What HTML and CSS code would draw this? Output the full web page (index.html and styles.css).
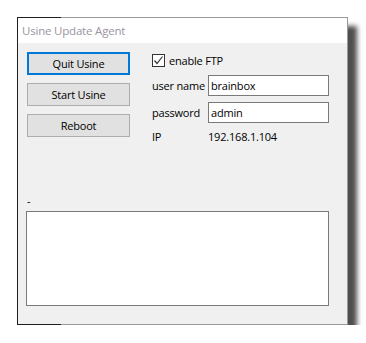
FILE: index.html
```html
<!DOCTYPE html>
<html lang="en">
<head>
    <meta charset="UTF-8">
    <title>Usine Update Agent</title>
    <link rel="stylesheet" href="styles.css">
</head>
<body>
    <div class="window">
        <div class="titlebar">Usine Update Agent</div>

        <div class="content">
            <div class="top">
                <div class="buttons">
                    <button class="btn btn-default">Quit Usine</button>
                    <button class="btn">Start Usine</button>
                    <button class="btn">Reboot</button>
                </div>

                <div class="ftp">
                    <label class="check-row">
                        <span class="checkbox">
                            <svg width="11" height="11" viewBox="0 0 11 11">
                                <path d="M1.5 5.5 L4 8.5 L9.5 1.5" fill="none" stroke="#333" stroke-width="1.2"/>
                            </svg>
                        </span>
                        enable FTP
                    </label>
                    <div class="field">
                        <span class="label">user name</span>
                        <input class="input" type="text" value="brainbox">
                    </div>
                    <div class="field">
                        <span class="label">password</span>
                        <input class="input" type="text" value="admin">
                    </div>
                    <div class="field ip">
                        <span class="label">IP</span>
                        <span>192.168.1.104</span>
                    </div>
                </div>
            </div>

            <div class="status">-</div>
            <div class="log"></div>
        </div>
    </div>
</body>
</html>
```

FILE: styles.css
```css
body {
    margin: 0;
    background: #fff;
    font-family: 'Open Sans', 'Noto Sans', sans-serif;
    font-size: 11px;
    letter-spacing: -0.2px;
    color: #000;
}
.window {
    position: relative;
    margin: 17px 0 0 17px;
    width: 329px;
    height: 306px;
    border: 1px solid #9a9a9a;
    border-left-color: #1e1e1e;
    background: #f0f0f0;
    box-shadow: 9px 9px 5px #4e4e4e;
    display: flex;
    flex-direction: column;
}
/* dark corner segments of the frame */
.window::before,
.window::after {
    content: "";
    position: absolute;
    left: -1px;
    width: 44px;
    height: 1px;
    background: #1e1e1e;
}
.window::before { top: -1px; }
.window::after { bottom: -1px; }
.titlebar {
    height: 25px;
    line-height: 25px;
    background: #fff;
    color: #9a959f;
    font-size: 11.5px;
    padding-left: 4px;
}
.content {
    flex: 1;
    padding: 9px 0 0 8px;
}
.top {
    display: flex;
    gap: 22px;
}
.buttons {
    display: flex;
    flex-direction: column;
    gap: 8px;
    padding-left: 1px;
}
.btn {
    width: 103px;
    height: 23px;
    border: 1px solid #adadad;
    background: #e1e1e1;
    font-family: inherit;
    font-size: 11px;
    letter-spacing: inherit;
    color: #000;
    padding: 0;
}
.btn-default {
    border: 2px solid #0078d7;
}
.ftp {
    display: flex;
    flex-direction: column;
    padding-top: 2px;
}
.check-row {
    display: flex;
    align-items: center;
    gap: 4px;
    height: 13px;
    margin-bottom: 8px;
}
.checkbox {
    width: 11px;
    height: 11px;
    border: 1px solid #333;
    background: #fff;
    display: flex;
}
.field {
    display: flex;
    align-items: center;
    height: 21px;
    margin-bottom: 6px;
}
.field .label {
    width: 56px;
}
.input {
    box-sizing: border-box;
    width: 121px;
    height: 21px;
    border: 1px solid #7a7a7a;
    background: #fff;
    font-family: inherit;
    font-size: 11px;
    letter-spacing: inherit;
    color: #000;
    padding: 0 2px;
}
.field.ip {
    height: 15px;
}
.status {
    margin-top: 43px;
    padding-left: 1px;
    line-height: 15px;
    height: 15px;
}
.log {
    margin-top: 3px;
    width: 301px;
    height: 93px;
    border: 1px solid #7a7a7a;
    background: #fff;
}
```
